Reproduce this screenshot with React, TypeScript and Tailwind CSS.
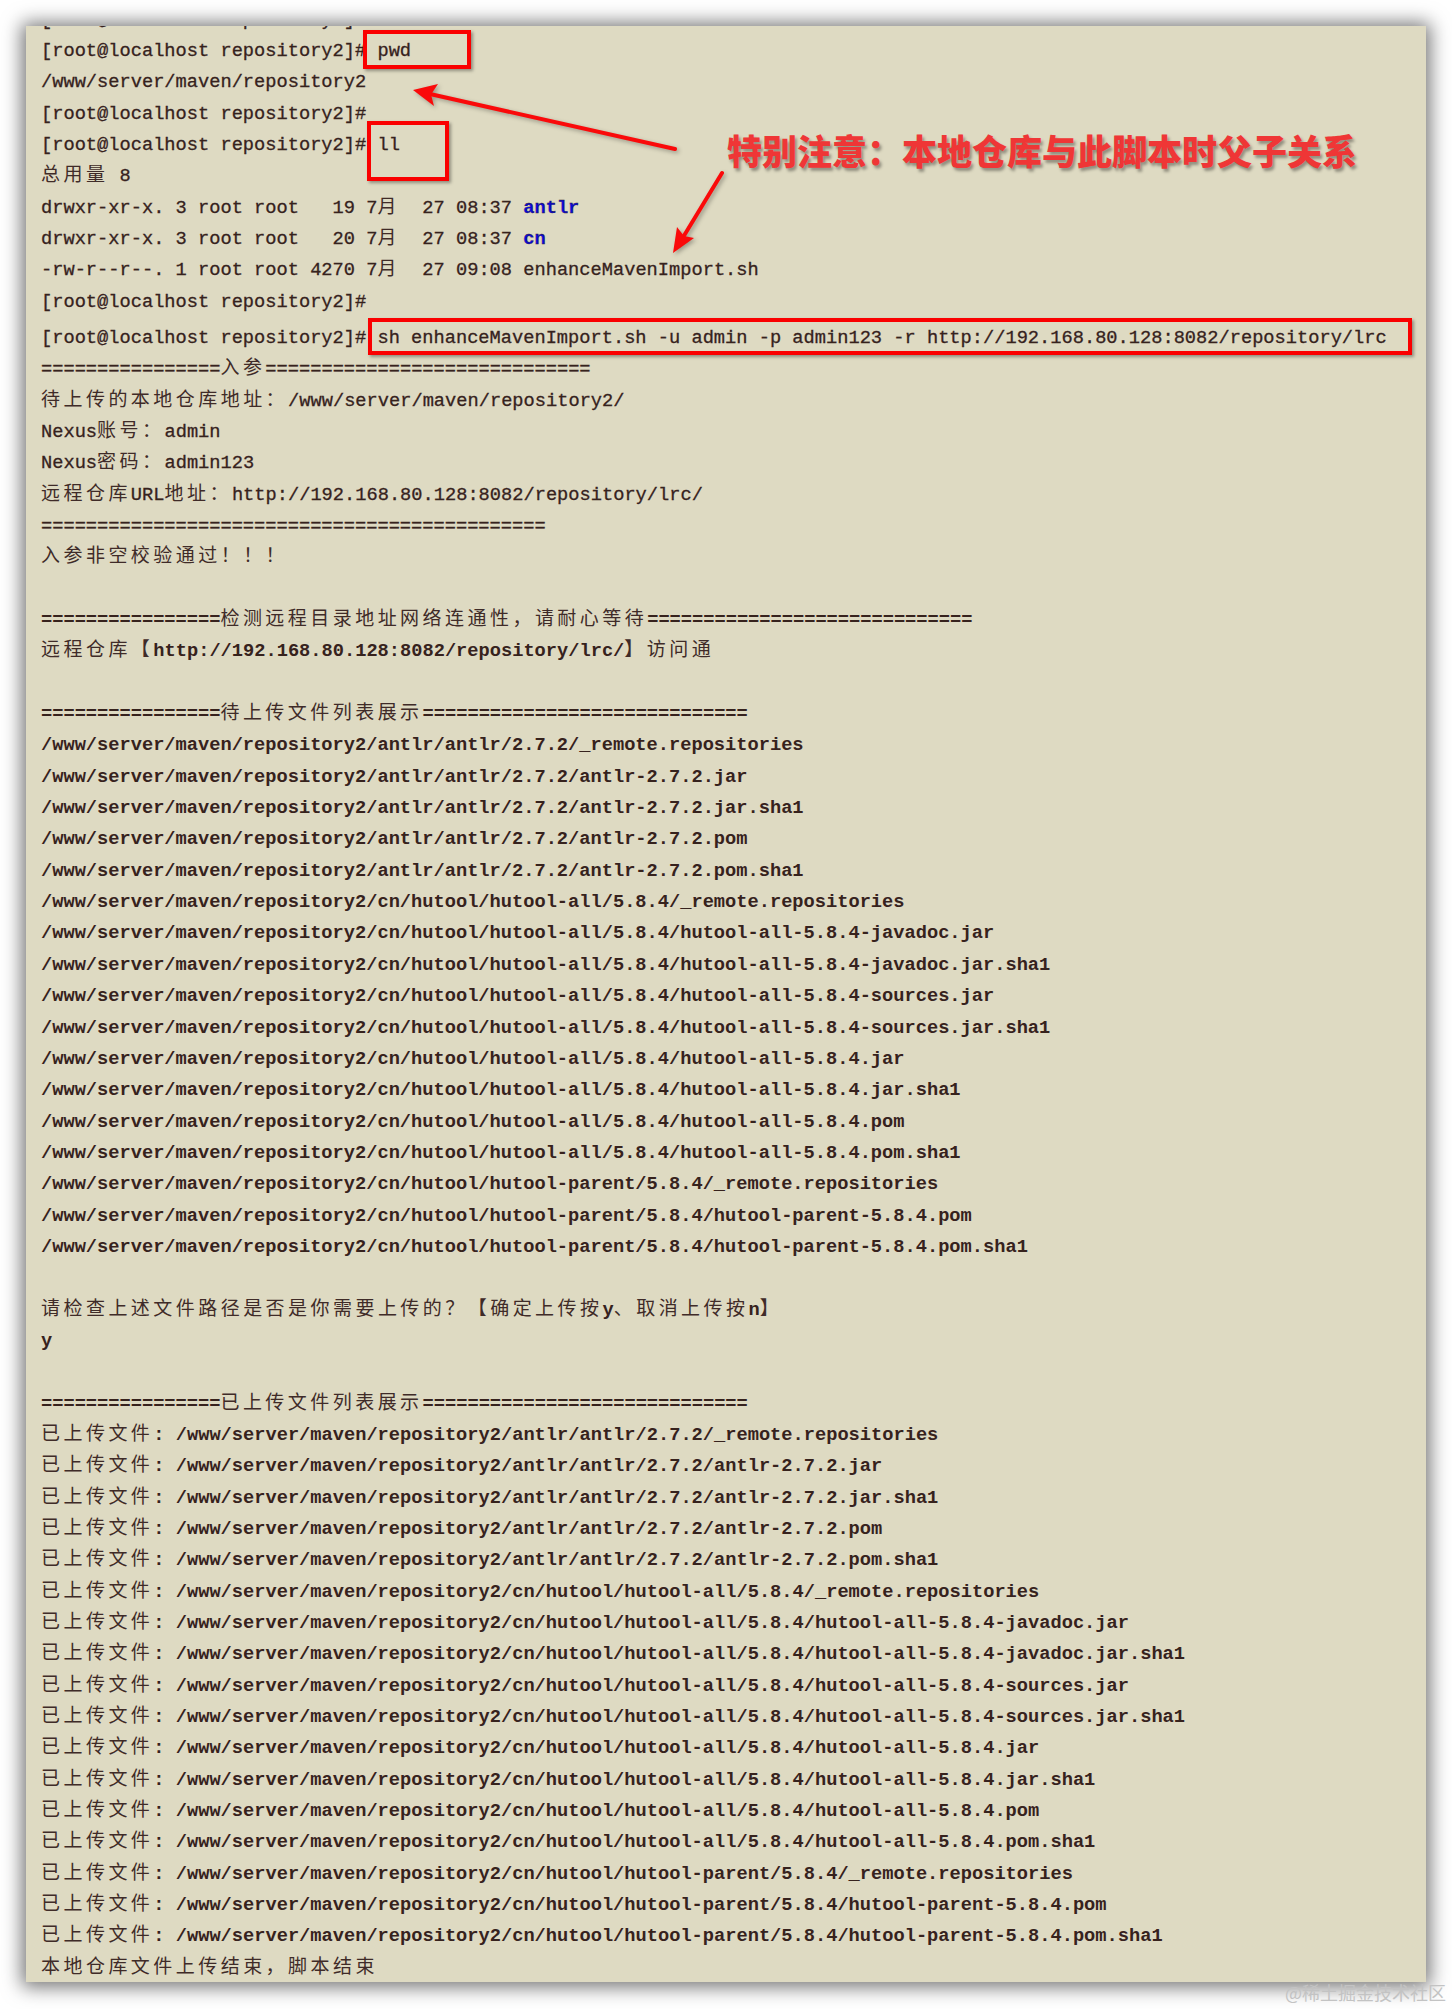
import React from 'react';

// full-width characters take two terminal cells
const WIDE = /[\u2e80-\u9fff\u3000-\u303f\uff00-\uffef]/;

function splitRuns(s: string) {
  const runs: { wide: boolean; text: string }[] = [];
  for (const ch of s) {
    const wide = WIDE.test(ch);
    const last = runs[runs.length - 1];
    if (last && last.wide === wide) last.text += ch;
    else runs.push({ wide, text: ch });
  }
  return runs;
}

const Mixed: React.FC<{ s: string }> = ({ s }) => (
  <>
    {splitRuns(s).map((r, i) =>
      r.wide ? (
        <span
          key={i}
          className="font-['Noto_Sans_CJK_SC',sans-serif] font-normal text-[19px] leading-none tracking-[3.46px] text-[#3f2b28] [-webkit-text-stroke:0px]"
        >
          {r.text}
        </span>
      ) : (
        <span key={i}>{r.text}</span>
      )
    )}
  </>
);

const Line: React.FC<{ children?: React.ReactNode; className?: string }> = ({ children, className = '' }) => (
  <div className={`h-[31.35px] leading-[31.35px] whitespace-pre ${className}`}>{children}</div>
);

const eq = (n: number) => '='.repeat(n);
const PROMPT = '[root@localhost repository2]#';

const files = [
  'antlr/antlr/2.7.2/_remote.repositories',
  'antlr/antlr/2.7.2/antlr-2.7.2.jar',
  'antlr/antlr/2.7.2/antlr-2.7.2.jar.sha1',
  'antlr/antlr/2.7.2/antlr-2.7.2.pom',
  'antlr/antlr/2.7.2/antlr-2.7.2.pom.sha1',
  'cn/hutool/hutool-all/5.8.4/_remote.repositories',
  'cn/hutool/hutool-all/5.8.4/hutool-all-5.8.4-javadoc.jar',
  'cn/hutool/hutool-all/5.8.4/hutool-all-5.8.4-javadoc.jar.sha1',
  'cn/hutool/hutool-all/5.8.4/hutool-all-5.8.4-sources.jar',
  'cn/hutool/hutool-all/5.8.4/hutool-all-5.8.4-sources.jar.sha1',
  'cn/hutool/hutool-all/5.8.4/hutool-all-5.8.4.jar',
  'cn/hutool/hutool-all/5.8.4/hutool-all-5.8.4.jar.sha1',
  'cn/hutool/hutool-all/5.8.4/hutool-all-5.8.4.pom',
  'cn/hutool/hutool-all/5.8.4/hutool-all-5.8.4.pom.sha1',
  'cn/hutool/hutool-parent/5.8.4/_remote.repositories',
  'cn/hutool/hutool-parent/5.8.4/hutool-parent-5.8.4.pom',
  'cn/hutool/hutool-parent/5.8.4/hutool-parent-5.8.4.pom.sha1',
].map((f) => '/www/server/maven/repository2/' + f);

const RedBox: React.FC<{ className: string }> = ({ className }) => (
  <div className={`absolute border-4 border-[#fa0000] shadow-[2px_2px_3px_rgba(0,0,0,0.35)] ${className}`} />
);

export default function App() {
  return (
    <div className="relative w-[1452px] h-[2009px] bg-white overflow-hidden pt-[26px] pl-[26px]">
      <div className="w-[1400px] h-[1956px] bg-[#dedac2] shadow-[0_1px_18px_4px_rgba(0,0,0,0.55)] overflow-hidden pl-[15px]">
        <div className="-mt-[21.5px] font-['Liberation_Mono',monospace] text-[18.7px] text-[#36221d]">
          {/* session start: commands */}
          <div className="[-webkit-text-stroke:0.3px_#36221d]">
            <Line>{PROMPT}</Line>
            <Line>{PROMPT} pwd</Line>
            <Line>/www/server/maven/repository2</Line>
            <Line>{PROMPT}</Line>
            <Line>{PROMPT} ll</Line>
            <Line><Mixed s="总用量 8" /></Line>
            <Line>
              <Mixed s="drwxr-xr-x. 3 root root   19 7月  27 08:37 " />
              <span className="font-bold text-[#0a0ad8]">antlr</span>
            </Line>
            <Line>
              <Mixed s="drwxr-xr-x. 3 root root   20 7月  27 08:37 " />
              <span className="font-bold text-[#0a0ad8]">cn</span>
            </Line>
            <Line><Mixed s="-rw-r--r--. 1 root root 4270 7月  27 09:08 enhanceMavenImport.sh" /></Line>
            <Line>{PROMPT}</Line>
            <Line className="mt-[5px]">
              {PROMPT} sh enhanceMavenImport.sh -u admin -p admin123 -r http://192.168.80.128:8082/repository/lrc
            </Line>
            <Line><Mixed s={eq(16) + '入参' + eq(29)} /></Line>
            <Line><Mixed s="待上传的本地仓库地址：/www/server/maven/repository2/" /></Line>
            <Line><Mixed s="Nexus账号：admin" /></Line>
            <Line><Mixed s="Nexus密码：admin123" /></Line>
            <Line><Mixed s="远程仓库URL地址：http://192.168.80.128:8082/repository/lrc/" /></Line>
            <Line>{eq(45)}</Line>
            <Line><Mixed s="入参非空校验通过！！！" /></Line>
            <Line />
          </div>

          {/* script output */}
          <div className="font-bold">
            <Line><Mixed s={eq(16) + '检测远程目录地址网络连通性，请耐心等待' + eq(29)} /></Line>
            <Line><Mixed s="远程仓库【http://192.168.80.128:8082/repository/lrc/】访问通" /></Line>
            <Line />
            <Line><Mixed s={eq(16) + '待上传文件列表展示' + eq(29)} /></Line>
            {files.map((f) => (
              <Line key={f}>{f}</Line>
            ))}
            <Line />
            <Line><Mixed s="请检查上述文件路径是否是你需要上传的？【确定上传按y、取消上传按n】" /></Line>
            <Line>y</Line>
            <Line />
            <Line><Mixed s={eq(16) + '已上传文件列表展示' + eq(29)} /></Line>
            {files.map((f) => (
              <Line key={'up' + f}>
                <Mixed s={'已上传文件: ' + f} />
              </Line>
            ))}
            <Line><Mixed s="本地仓库文件上传结束，脚本结束" /></Line>
          </div>
        </div>
      </div>

      {/* annotations drawn over the screenshot */}
      <RedBox className="left-[363px] top-[30px] w-[108px] h-[39px]" />
      <RedBox className="left-[367px] top-[121px] w-[82px] h-[60px]" />
      <RedBox className="left-[368px] top-[318px] w-[1044px] h-[37px]" />

      <svg
        className="absolute left-0 top-0 w-[1452px] h-[400px] drop-shadow-[2px_2px_2px_rgba(0,0,0,0.3)]"
        viewBox="0 0 1452 400"
        fill="none"
      >
        <line x1="675" y1="149" x2="430" y2="94" stroke="#fa0a0a" strokeWidth="4" strokeLinecap="round" />
        <path d="M413 90 L438 84 L431 94.5 L434 106 Z" fill="#fa0a0a" />
        <line x1="722" y1="173" x2="682" y2="239" stroke="#fa0a0a" strokeWidth="4" strokeLinecap="round" />
        <path d="M673 253 L677 227 L684 236 L694 238 Z" fill="#fa0a0a" />
      </svg>

      <div className="absolute left-[727px] top-[132px] font-['Noto_Sans_CJK_SC',sans-serif] font-black text-[35px] leading-none text-[#ef3636] [text-shadow:2px_3px_3px_rgba(0,0,0,0.35)] whitespace-nowrap">
        特别注意：本地仓库与此脚本时父子关系
      </div>

      <div className="absolute right-[6px] top-[1981px] font-['Noto_Sans_CJK_SC',sans-serif] text-[18px] leading-[22px] text-[#c3c3c3]">
        @稀土掘金技术社区
      </div>
    </div>
  );
}
